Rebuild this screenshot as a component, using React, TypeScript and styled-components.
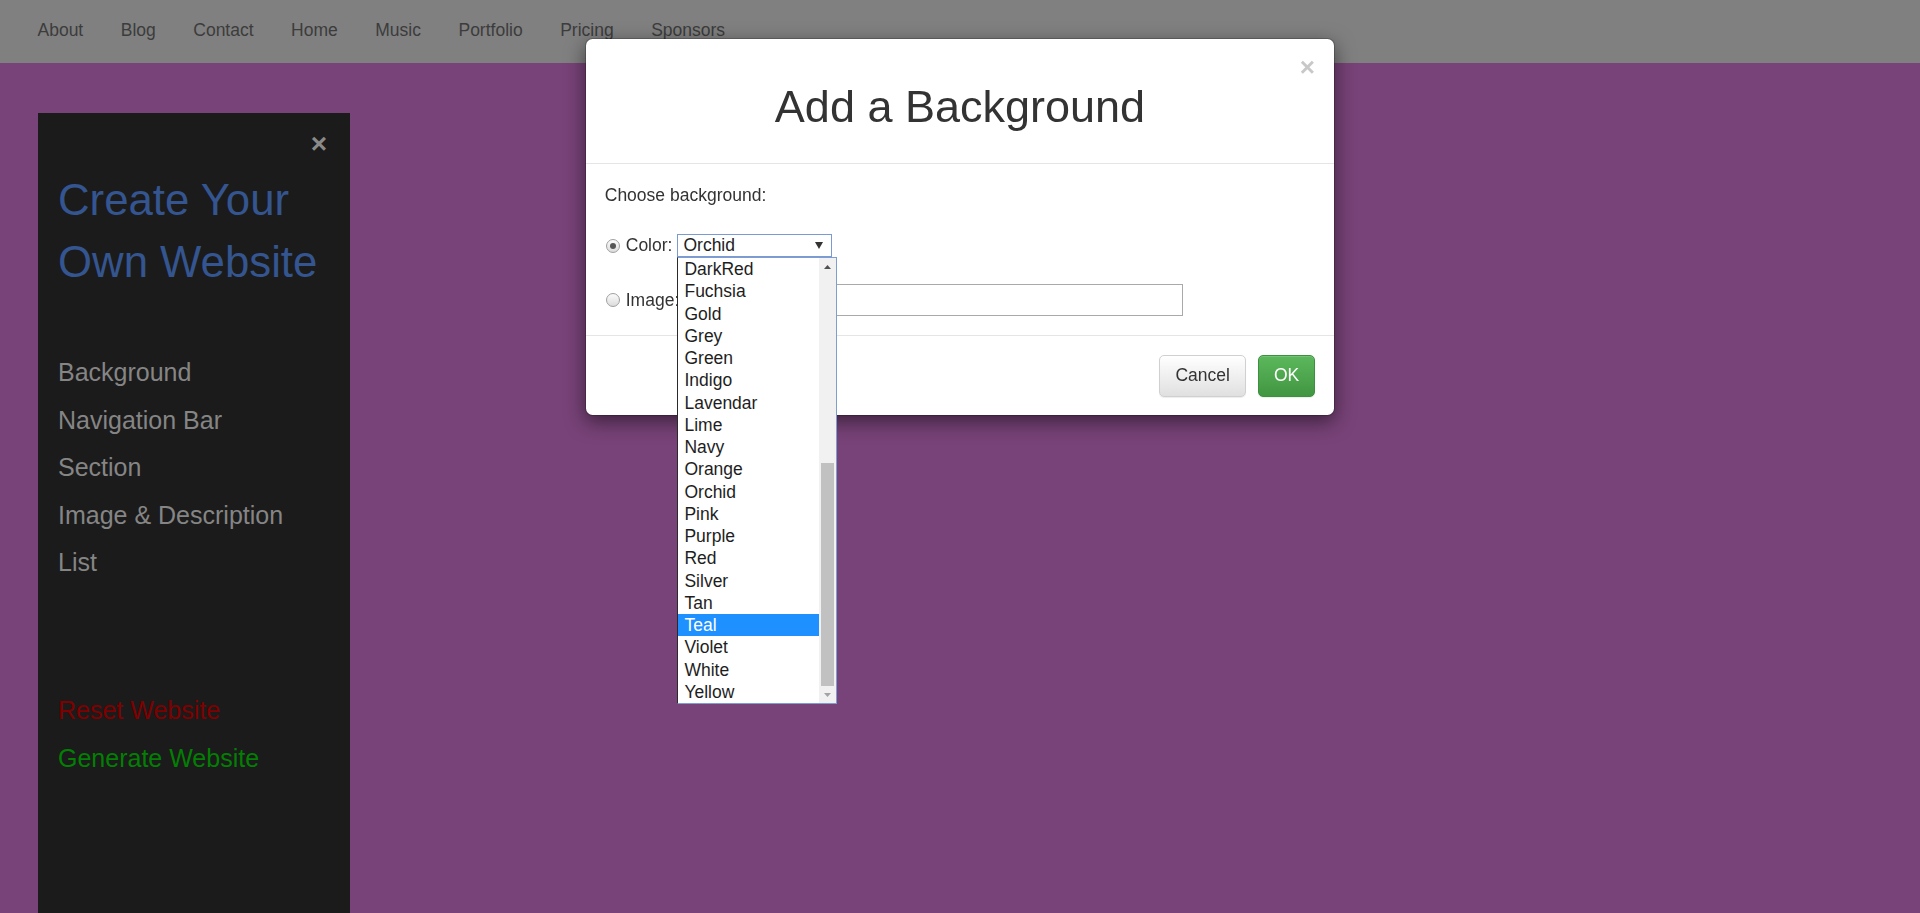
import React from 'react';
import styled, { createGlobalStyle, css } from 'styled-components';

const GlobalStyle = createGlobalStyle`
  html, body { margin: 0; padding: 0; }
  body {
    background: #784378;
    font-family: "Liberation Sans", Arial, Helvetica, sans-serif;
    overflow: hidden;
  }
  * { box-sizing: border-box; }
`;

const Page = styled.div`
  display: flex;
  flex-direction: column;
  height: 913px;
`;

const NavBar = styled.nav`
  flex-shrink: 0;
  height: 62.5px;
  background: #808080;
  padding: 0 18.75px;
`;

const NavList = styled.ul`
  display: flex;
  list-style: none;
  margin: 0;
  padding: 0;
`;

const NavLink = styled.a`
  display: block;
  padding: 18px 18.75px 17px;
  line-height: 25px;
  font-size: 17.5px;
  color: #3c3c3c;
  text-decoration: none;
`;

const Main = styled.main`
  flex: 1;
  display: flex;
  min-height: 0;
  padding: 50px 0 0 38px;
`;

const Sidebar = styled.aside`
  width: 312px;
  background: #1b1b1b;
  padding: 18px 20px 0;
  display: flex;
  flex-direction: column;
`;

const SidebarCloseRow = styled.div`
  display: flex;
  justify-content: flex-end;
  height: 25px;
`;

const SidebarClose = styled.span`
  font-size: 28px;
  font-weight: bold;
  line-height: 25px;
  color: #8a8a8a;
  margin-right: 3px;
`;

const SidebarTitle = styled.h2`
  margin: 13.5px 0 0;
  font-size: 43.75px;
  line-height: 61.5px;
  font-weight: normal;
  color: #34558f;
`;

const Menu = styled.nav<{ $gap: number }>`
  display: flex;
  flex-direction: column;
  margin-top: ${p => p.$gap}px;
`;

const MenuItem = styled.a<{ $tone?: 'default' | 'danger' | 'success' }>`
  display: block;
  font-size: 25px;
  line-height: 47.6px;
  text-decoration: none;
  color: ${p => (p.$tone === 'danger' ? '#7f0000' : p.$tone === 'success' ? '#037f03' : '#858585')};
`;

/* ---------- modal ---------- */

const Modal = styled.div`
  position: fixed;
  top: 37.5px;
  left: calc(50% - 375px);
  width: 750px;
  background: #fff;
  border: 1px solid rgba(0, 0, 0, 0.2);
  background-clip: padding-box;
  border-radius: 7.5px;
  box-shadow: 0 6px 19px rgba(0, 0, 0, 0.5);
  color: #333;
`;

const ModalHeader = styled.div`
  position: relative;
  padding: 18.75px;
  border-bottom: 1px solid #e5e5e5;
`;

const ModalClose = styled.span`
  position: absolute;
  top: 15px;
  right: 19px;
  font-size: 26px;
  line-height: 1;
  font-weight: bold;
  color: #c8c8c8;
`;

const ModalTitle = styled.h1`
  margin: 25px 0 12.5px;
  font-size: 45px;
  line-height: 49.5px;
  font-weight: 500;
  text-align: center;
  color: #333;
`;

const ModalBody = styled.div`
  padding: 18.75px;
  font-size: 17.5px;
`;

const Prompt = styled.div`
  line-height: 25px;
`;

const ChoiceRow = styled.div<{ $height: number; $gap: number }>`
  display: flex;
  align-items: center;
  height: ${p => p.$height}px;
  margin-top: ${p => p.$gap}px;
  line-height: 25px;
`;

const Radio = styled.span<{ $checked?: boolean }>`
  position: relative;
  flex-shrink: 0;
  width: 14px;
  height: 14px;
  margin: 0 5.5px 0 1.5px;
  border-radius: 50%;
  border: 1px solid #a0a0a0;
  background: linear-gradient(#fbfbfb, #dcdcdc);
  ${p =>
    p.$checked &&
    css`
      &::after {
        content: '';
        position: absolute;
        left: 3px;
        top: 3px;
        width: 6px;
        height: 6px;
        border-radius: 50%;
        background: #555;
      }
    `}
`;

const SelectWrap = styled.div`
  position: relative;
  margin-left: 5px;
`;

const SelectBox = styled.div`
  width: 155px;
  height: 23px;
  border: 1px solid #7b9ad1;
  padding: 0 8px 0 5px;
  display: flex;
  align-items: center;
  justify-content: space-between;
  font-size: 17.5px;
  line-height: 21px;
  color: #222;
  background: #fff;
`;

const DropList = styled.div`
  position: absolute;
  top: 100%;
  left: 0;
  width: 160px;
  height: 447px;
  display: flex;
  background: #fff;
  border: 1px solid #7f9dd0;
  border-left-color: #2a2a2a;
  z-index: 2;
`;

const Options = styled.div`
  flex: 1;
  display: flex;
  flex-direction: column;
`;

const Option = styled.div<{ $selected?: boolean }>`
  height: 22.25px;
  line-height: 22.25px;
  padding-left: 6px;
  font-size: 17.5px;
  color: ${p => (p.$selected ? '#fff' : '#1e1e1e')};
  background: ${p => (p.$selected ? '#1e90ff' : 'transparent')};
  white-space: nowrap;
`;

const ScrollTrack = styled.div`
  width: 17px;
  background: #f1f1f1;
  display: flex;
  flex-direction: column;
`;

const ScrollButton = styled.div`
  height: 17px;
  display: flex;
  align-items: center;
  justify-content: center;
  flex-shrink: 0;
`;

const ScrollSpace = styled.div`
  flex: 1;
`;

const ScrollThumb = styled.div`
  height: 223px;
  margin: 0 2px;
  background: #c1c1c1;
`;

const ImageInput = styled.div`
  width: 348px;
  height: 32px;
  margin-left: 155.5px;
  border: 1px solid #a9a9a9;
  background: #fff;
`;

const ModalFooter = styled.div`
  padding: 18.75px;
  border-top: 1px solid #e5e5e5;
  display: flex;
  justify-content: flex-end;
  gap: 12px;
`;

const Button = styled.button<{ $variant: 'default' | 'success' }>`
  font-family: inherit;
  font-size: 17.5px;
  line-height: 25px;
  padding: 7.5px 15px;
  border-radius: 5px;
  border: 1px solid;
  cursor: pointer;
  box-shadow: inset 0 1px 0 rgba(255, 255, 255, 0.15), 0 1px 1px rgba(0, 0, 0, 0.075);
  ${p =>
    p.$variant === 'success'
      ? css`
          color: #fff;
          background: linear-gradient(#5cb85c, #419641);
          border-color: #3e8f3e;
        `
      : css`
          color: #333;
          background: linear-gradient(#fff, #e0e0e0);
          border-color: #d0d0d0;
        `}
`;

const navItems = ['About', 'Blog', 'Contact', 'Home', 'Music', 'Portfolio', 'Pricing', 'Sponsors'];
const menuItems = ['Background', 'Navigation Bar', 'Section', 'Image & Description', 'List'];
const colorOptions = [
  'DarkRed', 'Fuchsia', 'Gold', 'Grey', 'Green', 'Indigo', 'Lavendar', 'Lime', 'Navy', 'Orange',
  'Orchid', 'Pink', 'Purple', 'Red', 'Silver', 'Tan', 'Teal', 'Violet', 'White', 'Yellow',
];

const Triangle = ({ dir, color, w = 8, h = 5 }: { dir: 'up' | 'down'; color: string; w?: number; h?: number }) => (
  <svg width={w} height={h} viewBox={`0 0 ${w} ${h}`}>
    {dir === 'up' ? (
      <polygon points={`0,${h} ${w / 2},0 ${w},${h}`} fill={color} />
    ) : (
      <polygon points={`0,0 ${w},0 ${w / 2},${h}`} fill={color} />
    )}
  </svg>
);

export default function App() {
  return (
    <>
      <GlobalStyle />
      <Page>
        <NavBar>
          <NavList>
            {navItems.map(n => (
              <li key={n}>
                <NavLink href="#">{n}</NavLink>
              </li>
            ))}
          </NavList>
        </NavBar>
        <Main>
          <Sidebar>
            <SidebarCloseRow>
              <SidebarClose>×</SidebarClose>
            </SidebarCloseRow>
            <SidebarTitle>
              Create Your
              <br />
              Own Website
            </SidebarTitle>
            <Menu $gap={57}>
              {menuItems.map(m => (
                <MenuItem key={m} href="#">
                  {m}
                </MenuItem>
              ))}
            </Menu>
            <Menu $gap={100.5}>
              <MenuItem href="#" $tone="danger">
                Reset Website
              </MenuItem>
              <MenuItem href="#" $tone="success">
                Generate Website
              </MenuItem>
            </Menu>
          </Sidebar>
        </Main>
      </Page>

      <Modal>
        <ModalHeader>
          <ModalClose>×</ModalClose>
          <ModalTitle>Add a Background</ModalTitle>
        </ModalHeader>
        <ModalBody>
          <Prompt>Choose background:</Prompt>
          <ChoiceRow $height={23} $gap={26.25}>
            <Radio $checked />
            <span>Color:</span>
            <SelectWrap>
              <SelectBox>
                <span>Orchid</span>
                <Triangle dir="down" color="#333" w={8} h={7} />
              </SelectBox>
              <DropList>
                <Options>
                  {colorOptions.map(c => (
                    <Option key={c} $selected={c === 'Teal'}>
                      {c}
                    </Option>
                  ))}
                </Options>
                <ScrollTrack>
                  <ScrollButton>
                    <Triangle dir="up" color="#505050" w={7} h={4} />
                  </ScrollButton>
                  <ScrollSpace />
                  <ScrollThumb />
                  <ScrollButton>
                    <Triangle dir="down" color="#a3a3a3" w={7} h={4} />
                  </ScrollButton>
                </ScrollTrack>
              </DropList>
            </SelectWrap>
          </ChoiceRow>
          <ChoiceRow $height={32} $gap={27}>
            <Radio />
            <span>Image:</span>
            <ImageInput />
          </ChoiceRow>
        </ModalBody>
        <ModalFooter>
          <Button $variant="default">Cancel</Button>
          <Button $variant="success">OK</Button>
        </ModalFooter>
      </Modal>
    </>
  );
}
